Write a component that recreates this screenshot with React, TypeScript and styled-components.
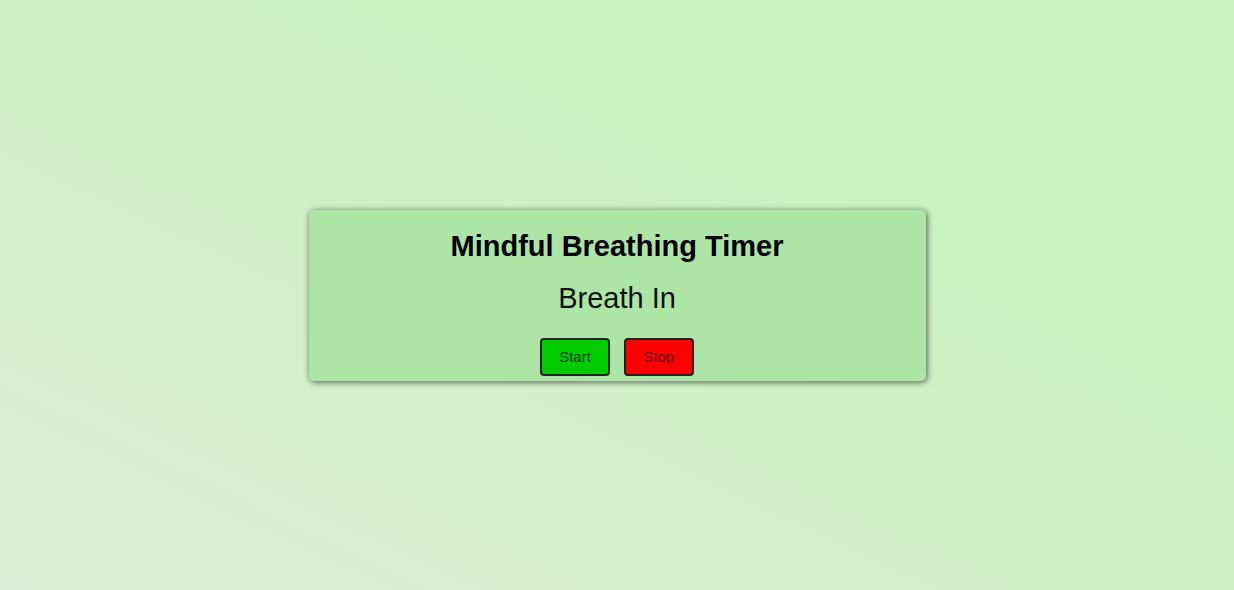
import React from "react";
import styled, { createGlobalStyle } from "styled-components";

const Global = createGlobalStyle`
  html, body { margin: 0; padding: 0; height: 100%; }
  body {
    font-family: "Liberation Sans", Arial, sans-serif;
    background: linear-gradient(25deg, #dcefd4 0%, #d2f0ca 35%, #cbf2c3 70%, #ccf2c4 100%);
    min-height: 590px;
  }
  #root { height: 100%; }
`;

const Page = styled.div`
  height: 590px;
  display: flex;
  align-items: center;
  justify-content: center;
`;

const Card = styled.div`
  width: 617px;
  height: 171px;
  box-sizing: border-box;
  background: #ace5a5;
  border-radius: 5px;
  box-shadow: 1px 1px 6px rgba(0, 0, 0, 0.65);
  display: flex;
  flex-direction: column;
  align-items: center;
  padding-top: 19px;
`;

const Title = styled.h1`
  margin: 0;
  font-size: 29px;
  font-weight: 700;
  line-height: 34px;
  color: #000;
`;

const Phase = styled.p`
  margin: 18px 0 0;
  font-size: 29px;
  font-weight: 400;
  line-height: 34px;
  color: #111;
`;

const Buttons = styled.div`
  display: flex;
  gap: 14px;
  margin-top: 23px;
`;

const Button = styled.button<{ $bg: string; $fg: string }>`
  width: 70px;
  height: 38px;
  box-sizing: border-box;
  border: 2px solid #222;
  border-radius: 4px;
  background: ${(p) => p.$bg};
  color: ${(p) => p.$fg};
  font-family: "Liberation Sans", Arial, sans-serif;
  font-size: 15px;
  padding: 0;
  cursor: pointer;
`;

export default function App() {
  return (
    <>
      <Global />
      <Page>
        <Card>
          <Title>Mindful Breathing Timer</Title>
          <Phase>Breath In</Phase>
          <Buttons>
            <Button $bg="#00cc00" $fg="#0f3a0f">Start</Button>
            <Button $bg="#ff0000" $fg="#5a0000">Stop</Button>
          </Buttons>
        </Card>
      </Page>
    </>
  );
}
